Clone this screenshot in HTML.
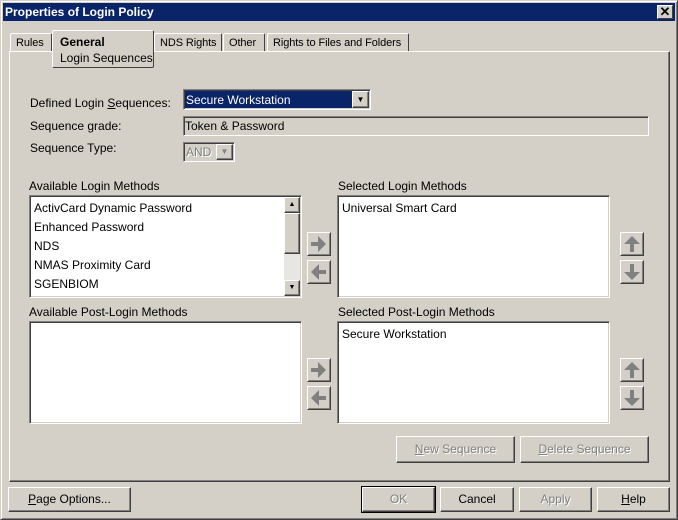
<!DOCTYPE html>
<html><head><style>
*{margin:0;padding:0;box-sizing:border-box}
body{width:678px;height:520px;background:#d4d0c8;font-family:"Liberation Sans",Arial,sans-serif;font-size:12px;color:#000;position:relative;overflow:hidden}
.a{position:absolute;white-space:nowrap}
.win{left:0;top:0;width:678px;height:520px;border:1px solid;border-color:#d4d0c8 #404040 #404040 #d4d0c8;box-shadow:inset 1px 1px #fff,inset -1px -1px #808080}
.title{left:3px;top:3px;width:672px;height:18px;background:#0a246a;color:#fff;font-weight:bold;font-size:12px;padding:2px 0 0 2px}
.close{left:657px;top:5px;width:16px;height:14px;background:#d4d0c8;border:1px solid;border-color:#fff #404040 #404040 #fff;font-weight:bold;color:#000;text-align:center;line-height:11px;font-size:13px}
.tab{top:33px;height:18px;border:1px solid;border-color:#fff #404040 transparent #fff;border-bottom:none;padding:3px 0 0 5px;border-radius:2px 2px 0 0;font-size:11px;letter-spacing:-0.1px}
.panel{left:9px;top:51px;width:661px;height:431px;border:1px solid;border-color:#fff #404040 #404040 #fff;box-shadow:-1px 0 #d4d0c8,inset -1px -1px #808080}
.sunk{border:1px solid;border-color:#808080 #fff #fff #808080;box-shadow:inset 1px 1px #404040,inset -1px -1px #d4d0c8;background:#fff}
.btn{border:1px solid;border-color:#fff #404040 #404040 #fff;box-shadow:inset -1px -1px #808080;text-align:center;background:#d4d0c8}
.dis{color:#808080;text-shadow:1px 1px #fff}
.item{left:4px;position:absolute}
</style></head><body>
<div class="a win"></div>
<div class="a title">Properties of Login Policy</div>
<div class="a close">✕</div>

<div class="a panel"></div>
<div class="a tab" style="left:10px;width:42px">Rules</div>
<div class="a tab" style="left:154px;width:68px">NDS Rights</div>
<div class="a tab" style="left:223px;width:42px">Other</div>
<div class="a tab" style="left:267px;width:142px">Rights to Files and Folders</div>
<div class="a" style="left:52px;top:30px;width:102px;height:38px;border:1px solid;border-color:#fff #404040 #404040 #fff;background:#d4d0c8;border-radius:2px"></div>
<div class="a" style="left:60px;top:35px;font-weight:bold">General</div>
<div class="a" style="left:60px;top:51px">Login Sequences</div>

<div class="a" style="left:30px;top:96px">Defined Login <u>S</u>equences:</div>
<div class="a sunk" style="left:183px;top:89px;width:188px;height:21px;background:#0a246a"></div>
<div class="a" style="left:186px;top:93px;color:#fff">Secure Workstation</div>
<div class="a btn" style="left:352px;top:91px;width:17px;height:17px;font-size:8px;line-height:15px">▼</div>

<div class="a" style="left:30px;top:119px">Sequence grade:</div>
<div class="a sunk" style="left:183px;top:116px;width:466px;height:20px;background:#d4d0c8"></div>
<div class="a" style="left:185px;top:119px">Token &amp; Password</div>

<div class="a" style="left:30px;top:141px">Sequence Type:</div>
<div class="a sunk" style="left:183px;top:142px;width:52px;height:20px;background:#d4d0c8"></div>
<div class="a dis" style="left:186px;top:145px">AND</div>
<div class="a btn" style="left:216px;top:144px;width:17px;height:16px;font-size:8px;line-height:14px;color:#808080">▼</div>

<div class="a" style="left:29px;top:179px">Available Login Methods</div>
<div class="a sunk" style="left:29px;top:195px;width:273px;height:103px">
<div class="item" style="top:5px">ActivCard Dynamic Password</div>
<div class="item" style="top:24px">Enhanced Password</div>
<div class="item" style="top:43px">NDS</div>
<div class="item" style="top:62px">NMAS Proximity Card</div>
<div class="item" style="top:81px">SGENBIOM</div>
</div>
<div class="a" style="left:284px;top:197px;width:16px;height:99px;background:#e8e6e2"></div>
<div class="a btn" style="left:284px;top:197px;width:16px;height:16px;font-size:7px;line-height:14px">▲</div>
<div class="a btn" style="left:284px;top:213px;width:16px;height:41px"></div>
<div class="a btn" style="left:284px;top:280px;width:16px;height:16px;font-size:7px;line-height:14px">▼</div>

<div class="a" style="left:338px;top:179px">Selected Login Methods</div>
<div class="a sunk" style="left:337px;top:195px;width:273px;height:103px"><div class="item" style="top:5px">Universal Smart Card</div></div>

<div class="a" style="left:29px;top:305px">Available Post-Login Methods</div>
<div class="a sunk" style="left:29px;top:321px;width:273px;height:103px"></div>
<div class="a" style="left:338px;top:305px">Selected Post-Login Methods</div>
<div class="a sunk" style="left:337px;top:321px;width:273px;height:103px"><div class="item" style="top:5px">Secure Workstation</div></div>

<svg class="a" style="left:0;top:0" width="678" height="520">
<defs>
<g id="b"><rect x="0" y="0" width="24" height="24" fill="#d4d0c8"/><path d="M0.5 23V0.5H23" stroke="#fff" fill="none"/><path d="M0.5 23.5H23.5V0.5" stroke="#404040" fill="none"/><path d="M1.5 22.5H22.5V1.5" stroke="#808080" fill="none"/></g>
<g id="r"><use href="#b"/><path d="M4 10H11V4L19 12L11 20V14H4Z" fill="#808080"/></g>
<g id="l"><use href="#b"/><path d="M19 10H12V4L4 12L12 20V14H19Z" fill="#808080"/></g>
<g id="u"><use href="#b"/><path d="M10 20V12H4L12 4L20 12H14V20Z" fill="#808080"/></g>
<g id="d"><use href="#b"/><path d="M10 4V12H4L12 20L20 12H14V4Z" fill="#808080"/></g>
</defs>
<use href="#r" x="307" y="232"/><use href="#l" x="307" y="260"/>
<use href="#u" x="620" y="232"/><use href="#d" x="620" y="260"/>
<use href="#r" x="307" y="358"/><use href="#l" x="307" y="386"/>
<use href="#u" x="620" y="358"/><use href="#d" x="620" y="386"/>
</svg>

<div class="a btn dis" style="left:396px;top:436px;width:119px;height:27px;line-height:25px"><u>N</u>ew Sequence</div>
<div class="a btn dis" style="left:520px;top:436px;width:129px;height:27px;line-height:25px"><u>D</u>elete Sequence</div>

<div class="a btn" style="left:8px;top:487px;width:123px;height:25px;line-height:23px"><u>P</u>age Options...</div>
<div class="a btn dis" style="left:362px;top:487px;width:73px;height:25px;line-height:23px;outline:1px solid #000">OK</div>
<div class="a btn" style="left:440px;top:487px;width:74px;height:25px;line-height:23px">Cancel</div>
<div class="a btn dis" style="left:519px;top:487px;width:73px;height:25px;line-height:23px">Apply</div>
<div class="a btn" style="left:597px;top:487px;width:73px;height:25px;line-height:23px"><u>H</u>elp</div>
</body></html>
